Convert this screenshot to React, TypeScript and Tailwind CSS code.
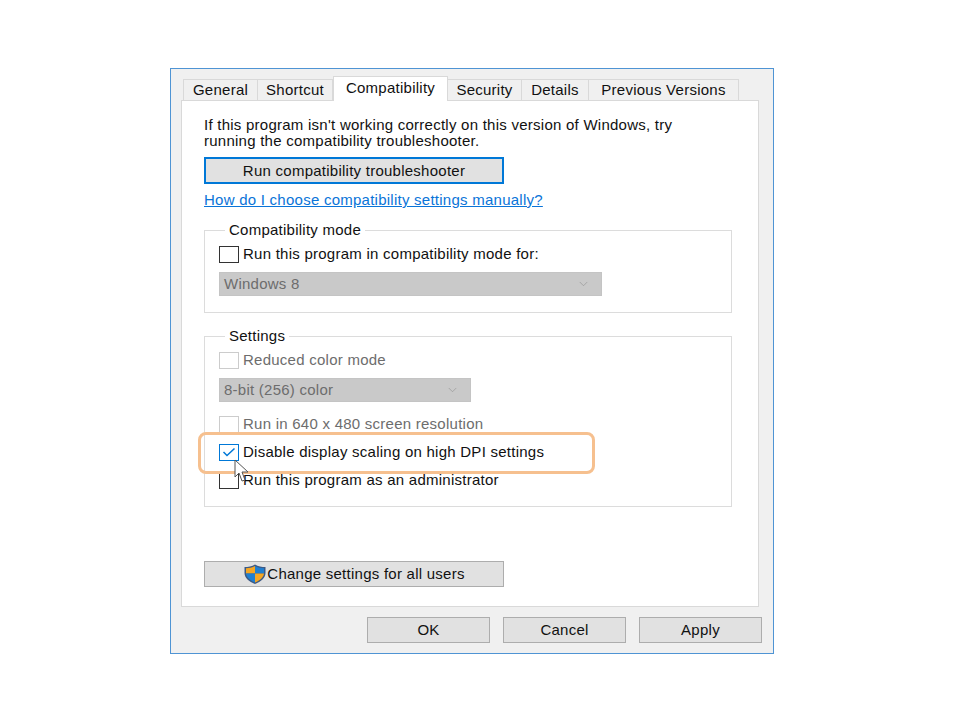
import React from 'react';
import { ChevronDown } from 'lucide-react';

const tabs = [
  { label: 'General', width: 'w-[75px]' },
  { label: 'Shortcut', width: 'w-[75px]' },
  { label: 'Compatibility', width: 'w-[115px]', active: true },
  { label: 'Security', width: 'w-[74px]' },
  { label: 'Details', width: 'w-[67px]' },
  { label: 'Previous Versions', width: 'w-[150px]' },
];

const CheckRow: React.FC<{ label: string; disabled?: boolean; checked?: boolean; className?: string }> = ({
  label,
  disabled,
  checked,
  className,
}) => (
  <div className={`flex items-center h-4 ${className ?? ''}`}>
    <span
      className={`w-5 h-[17px] shrink-0 border flex items-center justify-center bg-white ${
        checked ? 'border-[#0078d7]' : disabled ? 'border-[#cccccc]' : 'border-[#333333]'
      }`}
    >
      {checked && (
        <svg width="14" height="10" viewBox="0 0 14 10" fill="none">
          <path d="M1.5 5 L5 8.5 L12.5 1.5" stroke="#0078d7" strokeWidth="1.5" />
        </svg>
      )}
    </span>
    <span className={`ml-[4px] whitespace-nowrap ${disabled ? 'text-[#6d6d6d]' : 'text-[#111111]'}`}>{label}</span>
  </div>
);

const Combo: React.FC<{ value: string; width: string; className?: string }> = ({ value, width, className }) => (
  <div className={`${width} h-6 bg-[#c9c9c9] border border-[#c4c4c4] flex items-center justify-between pl-1 pr-[9px] ${className ?? ''}`}>
    <span className="text-[#6d6d6d]">{value}</span>
    <ChevronDown className="w-[17px] h-[14px] text-[#8e8e8e]" strokeWidth={1} />
  </div>
);

const Shield = () => (
  <svg width="24" height="20" viewBox="0 0 24 20" className="shrink-0">
    <path d="M12 0.5 C9 2.5 5 3 1.5 3 V9 C1.5 14 6 17.5 12 20 C18 17.5 22.5 14 22.5 9 V3 C19 3 15 2.5 12 0.5 Z" fill="#3d5a85" />
    <path d="M12 2 C9.5 3.5 6 4.2 3 4.3 V9.5 H12 Z" fill="#f5a623" />
    <path d="M12 2 C14.5 3.5 18 4.2 21 4.3 V9.5 H12 Z" fill="#1f7fd1" />
    <path d="M3 9.5 H12 V18.5 C7 16.5 3.5 13.5 3 9.5 Z" fill="#1f7fd1" />
    <path d="M21 9.5 H12 V18.5 C17 16.5 20.5 13.5 21 9.5 Z" fill="#f5a623" />
  </svg>
);

const FooterButton: React.FC<{ label: string }> = ({ label }) => (
  <button className="w-[123px] h-[26px] bg-[#e1e1e1] border border-[#adadad] text-[#111111] flex items-center justify-center">
    {label}
  </button>
);

export default function App() {
  return (
    <div className="w-[960px] h-[720px] bg-white pt-[68px] pl-[170px] font-['Liberation_Sans',sans-serif] text-[15px] leading-4 tracking-[0.25px]">
      <div className="w-[604px] h-[586px] border border-[#4f94d4] bg-[#f0f0f0] pl-[10px] pt-2 flex flex-col">
        <div className="flex items-end h-6 pl-[2px] relative z-10 mb-[-1px]">
          {tabs.map((tab) =>
            tab.active ? (
              <div
                key={tab.label}
                className={`${tab.width} h-[25px] bg-white border border-b-0 border-[#d9d9d9] flex items-start pt-[3px] justify-center text-[#111111]`}
              >
                {tab.label}
              </div>
            ) : (
              <div
                key={tab.label}
                className={`${tab.width} h-[22px] bg-[#f0f0f0] border border-[#d9d9d9] border-l-0 first:border-l flex items-center justify-center text-[#111111]`}
              >
                {tab.label}
              </div>
            ),
          )}
        </div>

        <div className="w-[578px] h-[507px] bg-white border border-[#d9d9d9] pl-[22px] pt-4 relative">
          <p className="text-[#111111] w-[510px]">
            If this program isn't working correctly on this version of Windows, try
            <br />
            running the compatibility troubleshooter.
          </p>
          <button className="mt-[8px] w-[300px] h-[27px] bg-[#e1e1e1] border-2 border-[#0078d7] text-[#111111] flex items-center justify-center">
            Run compatibility troubleshooter
          </button>
          <a className="block mt-2 text-[#0a74d8] underline">How do I choose compatibility settings manually?</a>

          <fieldset className="mt-[14px] w-[528px] h-[91px] border border-[#dcdcdc] pl-[14px]">
            <legend className="ml-[6px] px-[4px] text-[#111111]">Compatibility mode</legend>
            <CheckRow label="Run this program in compatibility mode for:" className="mt-[8px]" />
            <Combo value="Windows 8" width="w-[383px]" className="mt-[10px]" />
          </fieldset>

          <fieldset className="mt-[15px] w-[528px] h-[179px] border border-[#dcdcdc] pl-[14px]">
            <legend className="ml-[6px] px-[4px] text-[#111111]">Settings</legend>
            <CheckRow label="Reduced color mode" disabled className="mt-[8px]" />
            <Combo value="8-bit (256) color" width="w-[252px]" className="mt-[10px]" />
            <CheckRow label="Run in 640 x 480 screen resolution" disabled className="mt-[14px]" />
            <CheckRow label="Disable display scaling on high DPI settings" checked className="mt-[12px]" />
            <CheckRow label="Run this program as an administrator" className="mt-[12px]" />
          </fieldset>

          <button className="mt-[54px] w-[300px] h-[26px] bg-[#e1e1e1] border border-[#adadad] text-[#111111] flex items-center justify-center">
            <Shield />
            Change settings for all users
          </button>

          {/* highlight and cursor sit over the settings rows */}
          <div className="absolute left-[16px] top-[331px] w-[397px] h-[42px] rounded-lg border-[3px] border-[#f6c08f]" />
          <svg className="absolute left-[52px] top-[358px]" width="16" height="24" viewBox="0 0 16 24">
            <path d="M1 1 V18 L5 14 L8 22 L11 21 L8 13 H14 Z" fill="#ffffff" stroke="#555555" strokeWidth="1" />
          </svg>
        </div>

        <div className="flex gap-[13px] w-[581px] mt-[10px] justify-end">
          <FooterButton label="OK" />
          <FooterButton label="Cancel" />
          <FooterButton label="Apply" />
        </div>
      </div>
    </div>
  );
}
